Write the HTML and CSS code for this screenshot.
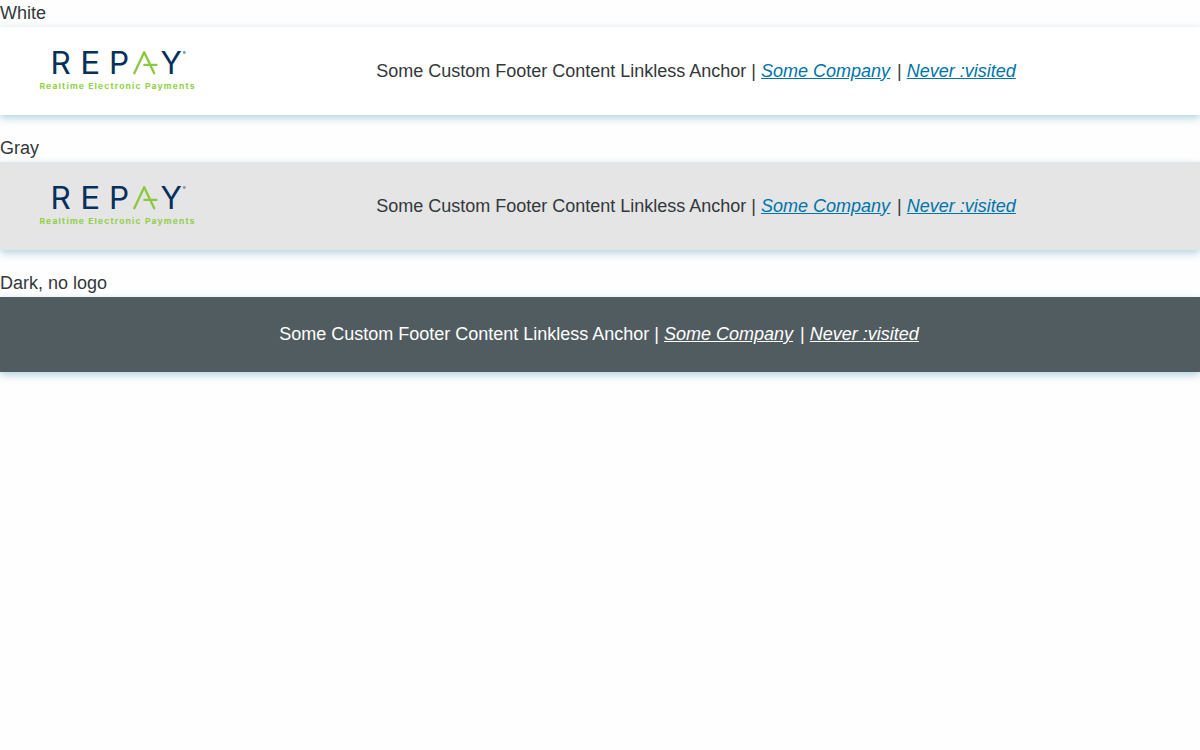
FILE: index.html
```html
<!DOCTYPE html>
<html lang="en">
<head>
<meta charset="utf-8">
<title>Footer</title>
<link rel="stylesheet" href="styles.css">
</head>
<body>
<section class="example">
  <div>White</div>
  <footer class="footer">
    <svg class="logo" viewBox="0 0 155 40" role="img" aria-label="Repay">
      <g class="logo-name">
        <text x="10.6" y="23">R</text>
        <text x="40.3" y="23" textLength="20" lengthAdjust="spacingAndGlyphs">E</text>
        <text x="69" y="23">P</text>
        <text x="120.6" y="23">Y</text>
      </g>
      <path class="logo-mark" d="M94.3 22.3 L104.2 1.2 L114.2 22.3 M104.3 13.9 H116.5"/>
      <circle class="logo-dot" cx="144.3" cy="1.5" r="1.4"/>
      <text class="logo-tag" x="-0.5" y="38.1" textLength="134.8" transform="scale(1.15 1)">Realtime Electronic Payments</text>
    </svg>
    <div class="content">Some Custom Footer Content <a>Linkless Anchor</a> | <a class="link" href="#company">Some Company</a> | <a class="link" href="#never">Never :visited</a></div>
  </footer>
</section>
<section class="example">
  <div>Gray</div>
  <footer class="footer gray">
    <svg class="logo" viewBox="0 0 155 40" role="img" aria-label="Repay">
      <g class="logo-name">
        <text x="10.6" y="23">R</text>
        <text x="40.3" y="23" textLength="20" lengthAdjust="spacingAndGlyphs">E</text>
        <text x="69" y="23">P</text>
        <text x="120.6" y="23">Y</text>
      </g>
      <path class="logo-mark" d="M94.3 22.3 L104.2 1.2 L114.2 22.3 M104.3 13.9 H116.5"/>
      <circle class="logo-dot" cx="144.3" cy="1.5" r="1.4"/>
      <text class="logo-tag" x="-0.5" y="38.1" textLength="134.8" transform="scale(1.15 1)">Realtime Electronic Payments</text>
    </svg>
    <div class="content">Some Custom Footer Content <a>Linkless Anchor</a> | <a class="link" href="#company">Some Company</a> | <a class="link" href="#never">Never :visited</a></div>
  </footer>
</section>
<section class="example">
  <div>Dark, no logo</div>
  <footer class="footer dark">
    <div class="content">Some Custom Footer Content <a>Linkless Anchor</a> | <a class="link" href="#company">Some Company</a> | <a class="link" href="#never">Never :visited</a></div>
  </footer>
</section>
</body>
</html>
```
FILE: styles.css
```css
body {
  margin: 0;
  background: #fefefe;
  color: #32383b;
  font: 18px/27px "Liberation Sans", Arial, sans-serif;
}
.example { margin-bottom: 20px; }
.footer {
  display: flex;
  align-items: center;
  padding: 24px 40px;
  background: #fff;
  box-shadow: 0 3px 8px rgba(0, 105, 155, 0.3);
}
.gray { background: #e5e5e5; }
.dark { background: #515c60; color: #fff; }
.logo { width: 155px; height: 40px; flex: none; overflow: visible; }
.content { flex: 1; text-align: center; }
.logo + .content { margin-left: 39px; }
.link { color: #0073aa; font-style: italic; text-decoration: underline; margin-right: 2px; }
.dark .link { color: #fff; }
.logo-name { font: 400 31.5px Inter, sans-serif; fill: #06305c; }
.logo-mark { fill: none; stroke: #8bc83f; stroke-width: 2.3; stroke-linecap: round; stroke-linejoin: round; }
.logo-dot { fill: #8298ae; }
.logo-tag { font: 700 7.4px Inter, sans-serif; fill: #92cf48; }
```
